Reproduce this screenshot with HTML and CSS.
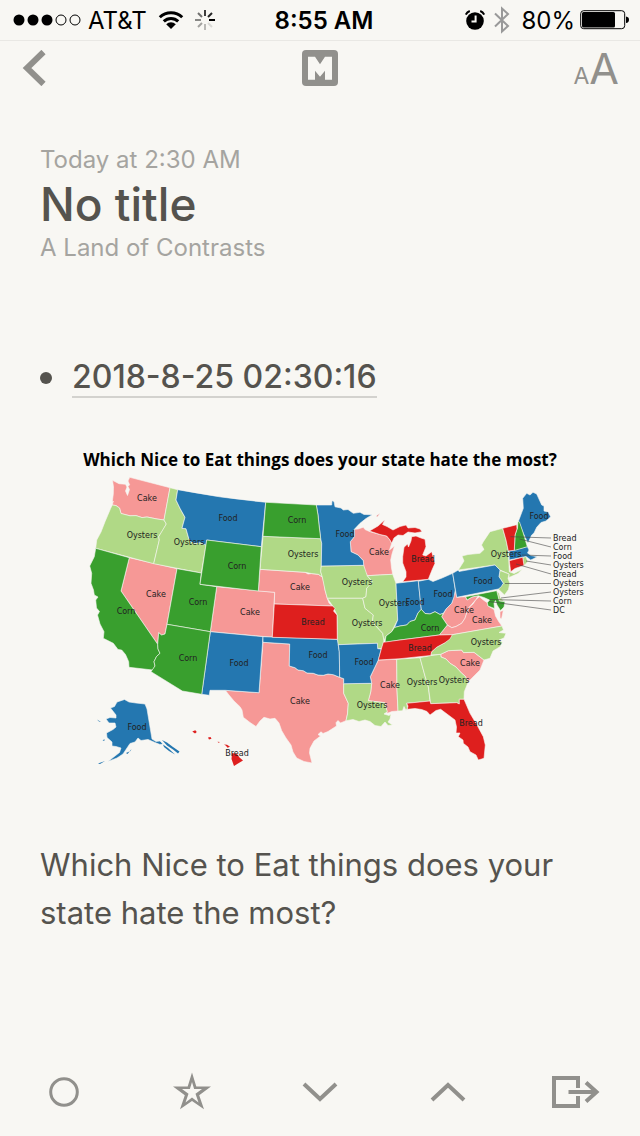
FILE: index.html
```html
<!DOCTYPE html>
<html lang="en">

<head>
  <title>No title</title>
  <meta charset="UTF-8">
  <meta name="viewport" content="width=device-width, initial-scale=1">
  <link rel="stylesheet" href="styles.css">
</head>

<body>

  <div class="status-bar">
    <div class="status-left">
      <svg class="signal" width="68" height="12" viewBox="0 0 68 12" aria-hidden="true">
        <circle cx="6" cy="6" r="5.5" />
        <circle cx="20" cy="6" r="5.5" />
        <circle cx="34" cy="6" r="5.5" />
        <circle class="empty" cx="48" cy="6" r="5" />
        <circle class="empty" cx="62" cy="6" r="5" />
      </svg>
      <span>AT&amp;T</span>
      <svg class="wifi" width="26" height="20" viewBox="0 0 26 20" aria-hidden="true">
        <path class="arc" d="M1.8 7.2a16 16 0 0 1 22.4 0M5.8 11.4a10.2 10.2 0 0 1 14.4 0" />
        <path d="M8.2 14.3a6.8 6.8 0 0 1 9.6 0L13 19z" />
      </svg>
      <svg class="spinner" width="20" height="20" viewBox="0 0 20 20" aria-hidden="true">
        <path opacity=".75" d="M10 0v6" />
        <path opacity=".85" d="M17 3l-4 4" />
        <path d="M20 10h-6" />
        <path opacity=".12" d="M17 17l-4-4" />
        <path opacity=".25" d="M10 20v-6" />
        <path opacity=".35" d="M3 17l4-4" />
        <path opacity=".45" d="M0 10h6" />
        <path opacity=".55" d="M3 3l4 4" />
      </svg>
    </div>
    <div class="time">8:55 AM</div>
    <div class="status-right">
      <svg class="alarm" width="20" height="20" viewBox="0 0 20 20" aria-hidden="true">
        <circle cx="10" cy="11" r="8.8" />
        <path class="bell" d="M.8 4.6a7 7 0 0 1 4-3.6M19.2 4.6a7 7 0 0 0-4-3.6" />
        <path class="hands" d="M10.6 5.5v6H6.5" />
      </svg>
      <svg class="bluetooth" width="16" height="28" viewBox="0 0 16 28" aria-hidden="true">
        <path d="M1 7.5l13 12.5-6 5.5v-23l6 5.5L1 20.5" />
      </svg>
      <span>80%</span>
      <svg class="battery" width="50" height="20" viewBox="0 0 50 20" aria-hidden="true">
        <rect class="case" x=".7" y=".7" width="44" height="18" rx="3" />
        <rect x="2" y="2" width="33" height="15.5" rx="1.5" />
        <path d="M46 6.5q3 .5 3 3.3t-3 3.3z" />
      </svg>
    </div>
  </div>

  <header class="nav">
    <a class="nav-back" href="#" aria-label="Back">
      <svg width="26" height="36" viewBox="0 0 26 36">
        <path d="M22.500 2L6 18l16.500 16" />
      </svg>
    </a>
    <a class="logo" href="#" aria-label="Home">
      <svg width="36" height="36" viewBox="0 0 36 36">
        <rect width="36" height="36" rx="4" />
        <path d="M6 6.700h7l5 7.500 5-7.500h7v23h-7v-9l-5 6-5-6v9H6z" />
      </svg>
    </a>
    <button class="text-size" aria-label="Text size"><span class="small">A</span><span class="big">A</span></button>
  </header>

  <main class="article">
    <p class="meta">Today at 2:30 AM</p>
    <h1>No title</h1>
    <p class="meta">A Land of Contrasts</p>

    <ul class="links">
      <li><a href="#">2018-8-25 02:30:16</a></li>
    </ul>

    <svg class="map" viewBox="40 440 560 340" role="img" aria-label="Map of food hated by state">
      <text class="map-title" x="320" y="466">Which Nice to Eat things does your state hate the most?</text>

      <g class="cake">
        <!-- WA NV CO NE -->
        <path d="M129.700 477.300L170 487.700 164 520 157 519 147 517 142 517.600 136 515.600 130 515.800 121 513.500 119.500 508 116 505.600 112.300 505 113.300 501 112.200 502.500 113.300 494 113.500 487 112.500 480.300 119 483.700 125.500 484.300 127 487 125.500 491 127.500 495.500 129.500 489.500 128 486.500 129.600 484.800 128 481z" />
        <path d="M129.300 557.700L177 568.700 167 624.300 165 634 161.500 635 158.700 632.700 157.700 644.300 121 591z" />
        <path d="M216.700 586.700L274.700 592.300 272.300 637.300 210.300 631.700z" />
        <path d="M260 569.300L305 572.300 308 574 311.700 573.600 315 574 318.300 574.300 322.300 577 324 583 325 590 327.300 598.300 329 603 332.700 606 274.300 604 274.700 592.300 258.300 591z" />
        <!-- TX -->
        <path d="M263 642.300L289.700 644 289.300 666 295 667.700 298 670 303.300 670.700 307 673 313.300 673.300 318 675 323.300 675.300 328 674 333.300 674.700 339.700 677.300 343.700 678.700 343.700 693.300 348.300 703.300 347.500 714 346 720.700 340.500 723 338 720.500 336 722.700 336.500 726 328 731.500 323 733.500 321 731.800 318 734.500 320.500 736 314 741 310 748.300 309.500 753 312 763 304 761.500 296.700 758 293 752 291 745 286 738 281.700 730.700 279 723 275 718.300 270 719 264 717.300 260 721 256 726.500 250 722.500 243.300 717.300 242 710 240 706.700 234 701 229 695 225.300 690.300 259 692.700z" />
        <!-- WI MS SC -->
        <path d="M354.300 529.300L358 529 363.300 527.300 365 529.500 370 531.700 380 534.500 386.700 536 390 540 391.700 543.300 389.500 550 394.500 546 392 554 390.700 560 391.500 568 392.700 574.300 367.300 575.700 364 570 363.300 560.700 358 555 351 551.700 350.300 541.700 354.300 536.700z" />
        <path d="M378.300 660L396.700 659.300 397 690 398 711 392 711.500 387.300 713.300 384.700 702.700 368.300 700.700 370.700 692 371.700 683.300 370.300 676.700 374 669z" />
        <path d="M440.700 654.300L448.300 650.700 461.700 650 463.500 652.600 474 652.300 484 660 480 670 474 676 468.300 681.700 465 676 461.700 673.300 456 667 450 663.300 446 659 441 657z" />
        <!-- WV VA -->
        <path d="M455.300 590L456.700 597.300 465.700 596.700 467 600 472 597 478.300 595.700 476 599.500 468.300 608.300 465 618.300 461.700 623.300 456 626.500 451.700 627.700 447.300 625 441.700 616.700 446 609 451.700 603.300z" />
        <path d="M447.300 625L451.700 627.700 456 626.500 461.700 623.300 465 618.300 468.300 608.300 473 604 476 599.500 479.300 596.700 484 600.500 487.300 602.700 488 606 494 609.500 495.500 616 499 622 502 626 452.300 634.700 439.300 635z" />
        <path d="M500 611.500L503.300 610.500 501.500 619 500 618z" />
      </g>

      <g class="oysters">
        <!-- OR ID -->
        <path d="M112.300 505L116 505.600 119.500 508 121 513.500 130 515.800 136 515.600 142 517.600 147 517 157 519 164 520 166.300 524 163 530 158.700 536.700 159.300 540 153.700 563.700 95.700 548.300 96.700 540 101 532 105 521.700 110.700 508.300z" />
        <path d="M170 487.700L177.700 489.700 176 500 180 508.300 183 514 185 517.300 182 528.300 186 528.700 188.700 538.300 190.700 542 195 543.300 200 542.700 205 544 206 545 201.300 573 153.700 563.700 159.300 540 158.700 536.700 166.300 524 164 520z" />
        <!-- SD IA MO IL -->
        <path d="M263 536.300L320.700 538.700 321.700 543.300 321.300 566 320.700 571.700 322.300 577 318.300 574.300 311.700 573.600 305 572.300 260 569.300z" />
        <path d="M321.300 566L363.700 565.300 367.300 575.700 372.300 581.700 371 585 366.700 588.300 366 596.700 362.700 598.300 327.300 598.300 325 590 322.300 577 320.700 571.700z" />
        <path d="M327.300 598.300L362.700 598.300 365 608.300 371 613 373.300 615 372.500 621 375 625 382.700 633.300 384 640.700 381.700 648.300 377.700 648.700 377.300 643.300 337.700 644.700 337 615 332.700 606z" />
        <path d="M367.300 575.700L392.700 574.300 396 583.300 397.700 620 395 625 391.700 631.700 386 636 384 640.700 382.700 633.300 375 625 372.500 621 373.300 615 365 608.300 362.700 598.300 366 596.700 366.700 588.300 372.300 581.700z" />
        <!-- LA AL GA NC -->
        <path d="M343.700 683.700L371.700 683.300 370.700 692 368.300 700.700 384.700 702.700 387.300 711.700 384 714 389 715.500 391 714 390 719 388 722 392.500 725 388 725.500 385 722 381 726.500 375 725.500 370 721.500 365 720 359 721.500 353 719.500 346 720.700 347.500 714 348.300 703.300 343.700 693.300z" />
        <path d="M396.700 659.300L420 657.700 425 676 428.300 686.700 430 701 406.700 703.300 407.500 708 406 710.500 404 706.500 402.500 710.800 398 711 397 690z" />
        <path d="M420 657.700L430.700 655.600 440.700 654.300 441 657 446 659 450 663.300 456 667 461.700 673.300 465 676 468.300 681.700 464.300 691.700 464 699.300 459.300 699.300 459.300 704 456.700 702.700 430.700 703.700 428.300 686.700 425 676z" />
        <path d="M452.300 634.700L502 626 503.500 630 499 632.500 506 633.300 504 638 499 640 502.500 642.500 500 646.700 493 651 490 658.300 484 660 474 652.300 463.500 652.600 461.700 650 448.300 650.700 440.700 654.300 430.700 655 431.700 651.700 437 647 445 642.700z" />
        <!-- NY NJ RI DE -->
        <path d="M458.300 570L464 561 462 556 468 554.500 480 553.300 484 549.500 481.500 545 483.300 541.700 490 531.700 502.700 528.300 506 540 508.300 551 509.300 571.700 514 573.500 522.300 569.300 518 573.500 509 577.500 509 574 500 570 495 565z" />
        <path d="M500 570.500L509 574 508 578.500 509.800 583 508.500 589.500 504.500 595 498.300 589 503.300 583.300 499 576.700z" />
        <path d="M522.700 557.300L526 556.500 527.700 561.700 524 565.700z" />
        <path d="M496.700 591L499 593 500.500 598 504.500 601.300 499.300 601z" />
      </g>

      <g class="food">
        <!-- MT NM OK AR -->
        <path d="M177.700 489.700Q220 498 265.700 502.300L261.300 546.700 206.700 540 206 545 200 542.700 195 543.300 190.700 542 188.700 538.300 186 528.700 182 528.300 185 517.300 180 508.300 176 500z" />
        <path d="M210.300 631.700L263 636.700 259 692.700 225.300 690.300 210 690.300 209.300 695.300 201.700 694.300z" />
        <path d="M263 636.700L337.300 639.300 339.300 651.700 339.700 677.300 333.300 674.700 328 674 323.300 675.300 318 675 313.300 673.300 307 673 303.300 670.700 298 670 295 667.700 289.300 666 289.700 644 263 642.300z" />
        <path d="M338.300 644.700L377.300 643.300 377.700 648.700 381.300 649 378.300 660 374 669 370.300 676.700 371.700 683.300 343.700 683.700 343.700 678.700 339.700 677.300 339.300 651.700z" />
        <!-- MN IN OH PA -->
        <path d="M316.300 505L331.700 505 332 500.700 334 501.500 335 506.800 341 508 343.300 510 348 509.500 353.300 513.300 360 512.300 364 514.500 372.300 514.700 366 518.500 360 523.300 354.300 529.300 354.300 536.700 350.300 541.700 351 551.700 358 555 363.300 560.700 363.700 565.300 321.300 566 321.700 543.300 320.700 538.700 319 525 318 515z" />
        <path d="M396 583.300L418.300 580.700 421.300 609.300 418 613 415 620 410 621.500 406.700 625 400 626 394.500 627.500 397.700 620z" />
        <path d="M418.300 581.300L428.300 579.300 433 581.500 442 578 452.700 573.300 455.300 590 454 597 451.700 603.300 446 609 443.300 613.300 440 614.500 435 611.700 430 614 425 613.500 421.300 609.300z" />
        <path d="M452.700 573.300L458.300 570 459 571.500 495 565 500 570 499 576.700 503.300 583.300 501 587 498.300 589 456.700 597.300z" />
        <!-- ME MA -->
        <path d="M518.500 521L523.300 508.300 522.700 498.300 526.700 493.300 530 495 533 492.300 536.700 494 541.700 505 544 506 544 511 548 512 550.700 516.700 546 521 541 522.500 536.700 527.300 534 533 531.700 535 528 543 525 537 523.300 533.300z" />
        <path d="M509 551L522 548 527.300 546.500 529 550 527.500 553 531 555.500 537.300 556.700 533 559 530.700 560 526 556.500 509.300 560z" />
        <!-- AK -->
        <path d="M124.500 699.500L129 702 136 703 145 704 147 709 150.500 730 152 739 156 741.500 160 741 163 744 160 744.500 155 742.500 148 739.500 141 740.500 138 738 135 742 130 743.500 127 748 123 754 117 758 108 761.500 115 756 119.500 752.500 121 748 116 746.500 112 746 112 742 107 737.500 106.500 733 113 729.500 116 727 115 723 109 723 106 719 110 717.500 116 718 116 715 110.500 708 114.500 706.500 117 702z" />
        <path class="islands" d="M162 740L167 742.500 173 747 179.500 751.500 178 753.500 173 749.500 167 745.500zM163 744.500L168 748 175 754.500 169 751 164 747zM126 753l4.500-2 1-2-4 5zM97 719.500l4 2.500-2-.5zM102.500 740l2.500-.5-1 1.500zM98 763.500l7-2.500-5 3zM93 766l3-1.500z" />
      </g>

      <g class="corn">
        <!-- CA UT AZ WY ND -->
        <path d="M95.700 548.300L129.300 557.700 121 591 157.700 644.300 158 649 160 653.300 156.500 656.500 154 661.700 155 666 152.700 670 129 667.300 128.700 661.700 125.500 654.500 121.700 650 118 649.500 113.300 643.300 103.300 638.300 104 631.700 100 624 97.500 615 99.500 611.500 96.500 608 95.700 600 98 597 94.300 595 93.500 590 91 583.300 91.700 573.300 89.700 566 94.300 556.700z" />
        <path d="M177 568.700L201.300 573 200 584.300 216.700 586.700 210.300 631.700 167 624.300z" />
        <path d="M167 624.300L210.300 631.700 201.700 694.300 182.300 691 151 671.700 155 666 154 661.700 156.500 656.500 160 653.300 158 649 157.700 644.300 158.700 632.700 161.500 635 165 634z" />
        <path d="M206.700 540L261.300 546.700 258.300 591 200 584.300z" />
        <path d="M265.700 502.300L316.300 505 318 515 319 525 320.700 538.700 263 536.300z" />
        <!-- KY NH MD -->
        <path d="M421.300 609.300L425 613.500 430 614 435 611.700 440 614.500 443.300 613.300 441.700 616.700 447.300 625 439.300 635 400 640 385 642.300 386 636 391.700 631.700 394.500 627.500 400 626 406.700 625 410 621.500 415 620 418 613z" />
        <path d="M518 521.300L519.500 522 523.300 533.300 527.300 546.700 514.300 550.500 515 535 517.500 528z" />
        <path d="M465.700 596.700L496.700 590.700 499.300 601 505 601.700 504 607 500.500 610.500 497 605 495.500 600.500 494 603 494.500 608.500 488 606 487.300 602.700 489.500 600 484 597.500 478.300 595.700 472 597 467 600z" />
      </g>

      <g class="bread">
        <!-- KS TN FL -->
        <path d="M274.300 604L332.700 606 335 608.500 333.500 611 337 615 337.300 639.300 272.300 637.300z" />
        <path d="M383.300 642.300L400 640 439.300 635 452.300 634.700 450 639 445 642.700 437 647 431.700 651.700 430.700 655.500 400 658.700 378.300 660 381.300 649z" />
        <path d="M406.700 703.300L430 701 430.700 703.700 456.700 702.700 459.300 704 459.300 699.300 464 699.300 470 713.300 477 725 483.300 736.700 485.300 745 484 758.300 478.300 760 476 755 470 751.700 468 747 463.300 743.300 463 740 458.300 736.700 460 733 456 733 456.500 727 455 720 449 715.500 440.700 709.300 436 710.500 430 715 427 711.500 421.700 709.500 415 708.500 407.300 709.300 408 706z" />
        <!-- MI VT CT -->
        <path d="M369.500 531L378 526 385 519.800 382.500 524.500 387 526.500 393 530 400 526.500 406 525 408 528 415 527.500 420 529 422 531.700 415 533 408 532 403 535.500 398 535 394 538 391.700 543.300 390 540 386.700 536 380 534.500z" />
        <path d="M376 516.500l4-3.500-2.500 3.500z" />
        <path d="M402.700 581.700L406 577 406 571.700 402.700 563 402.700 556.700 404 547.300 407.500 544 408.500 547 411 541 411.700 536.700 416 536 421 538 425 539.300 426 546.700 422.700 555 426 556 431.700 551.700 435 563.300 432 570 428.300 579.300z" />
        <path d="M502.700 528.300L516.700 524.700 517 529 515 535 514.300 550.300 508.300 551 506 540z" />
        <path d="M509.300 560.700L522.700 557.300 524 565.500 515 568.500 510.700 571.700z" />
        <!-- HI -->
        <path class="islands" d="M192.300 731.500l3-1.200 1.500 1.700-1.800 1.400zM208 737.500l2.500-.5 1 1.800-2.500.7zM217.500 741.700l2.500.3-1.500.8zM224 744.500l3 .3 3 2-2.500 1-1.500-2zM232 753l5 1 2.500 3.500 3.500 3-5 3-4 2.500-2.500-7z" />
      </g>

      <path class="leader" d="M510.500 536.700L551 538M519.500 539L551 547M522 555L551 556M526 561L551 565M516 564L551 574M505 583.500H551M501 598L551 592M490 599.500L551 601M489 601.500L551 610" />

      <g class="label">
        <text x="147" y="501">Cake</text>
        <text x="142" y="538">Oysters</text>
        <text x="189" y="545">Oysters</text>
        <text x="228" y="521">Food</text>
        <text x="297" y="523">Corn</text>
        <text x="303" y="557">Oysters</text>
        <text x="345" y="537">Food</text>
        <text x="379" y="555">Cake</text>
        <text x="423" y="562">Bread</text>
        <text x="237" y="569">Corn</text>
        <text x="300" y="590">Cake</text>
        <text x="357" y="585">Oysters</text>
        <text x="156" y="597">Cake</text>
        <text x="126" y="614">Corn</text>
        <text x="198" y="605">Corn</text>
        <text x="250" y="615">Cake</text>
        <text x="313" y="625">Bread</text>
        <text x="367" y="626">Oysters</text>
        <text x="394" y="606">Oysters</text>
        <text x="415" y="605">Food</text>
        <text x="443" y="597">Food</text>
        <text x="483" y="584">Food</text>
        <text x="506" y="557">Oysters</text>
        <text x="539" y="519">Food</text>
        <text x="464" y="613">Cake</text>
        <text x="482" y="623">Cake</text>
        <text x="430" y="631">Corn</text>
        <text x="486" y="645">Oysters</text>
        <text x="420" y="651">Bread</text>
        <text x="470" y="666">Cake</text>
        <text x="188" y="661">Corn</text>
        <text x="239" y="666">Food</text>
        <text x="318" y="658">Food</text>
        <text x="364" y="665">Food</text>
        <text x="390" y="688">Cake</text>
        <text x="422" y="685">Oysters</text>
        <text x="454" y="683">Oysters</text>
        <text x="300" y="704">Cake</text>
        <text x="372" y="708">Oysters</text>
        <text x="471" y="726">Bread</text>
        <text x="137" y="730">Food</text>
        <text x="237" y="756">Bread</text>
      </g>

      <g class="label side">
        <text x="553" y="541">Bread</text>
        <text x="553" y="550">Corn</text>
        <text x="553" y="559">Food</text>
        <text x="553" y="568">Oysters</text>
        <text x="553" y="577">Bread</text>
        <text x="553" y="586">Oysters</text>
        <text x="553" y="595">Oysters</text>
        <text x="553" y="604">Corn</text>
        <text x="553" y="613">DC</text>
      </g>
    </svg>

    <p class="body-text">Which Nice to Eat things does your state hate the most?</p>
  </main>

  <footer class="toolbar">
    <button aria-label="Mark as read">
      <svg width="32" height="32" viewBox="0 0 32 32">
        <circle cx="16" cy="16" r="13.3" />
      </svg>
    </button>
    <button aria-label="Favorite">
      <svg width="40" height="40" viewBox="0 0 40 40">
        <path fill-rule="evenodd" class="solid" d="M20 0.500L24.300 14.500H39L27.200 23.200 32 37.300 20 29 8 37.300 12.800 23.200 1 14.500H15.700zM20 10L17.900 17H10L16.500 21.800 13.500 30.500 20 25.500 26.500 30.500 23.500 21.800 30 17H22.100z" />
      </svg>
    </button>
    <button aria-label="Next">
      <svg width="36" height="20" viewBox="0 0 36 20">
        <path d="M2 2l16 15L34 2" />
      </svg>
    </button>
    <button aria-label="Previous">
      <svg width="36" height="20" viewBox="0 0 36 20">
        <path d="M2 18L18 3l16 15" />
      </svg>
    </button>
    <button aria-label="Share">
      <svg width="48" height="32" viewBox="0 0 48 32">
        <path d="M26 12V2H2v28h24V20M16.500 16H44M34 6.500L44.500 16 34 25.500" />
      </svg>
    </button>
  </footer>

</body>

</html>
```
FILE: styles.css
```css
* {
  box-sizing: border-box;
}

body {
  margin: 0;
  min-height: 100vh;
  display: flex;
  flex-direction: column;
  background-color: #f8f7f3;
  color: #55534e;
  font-family: Inter, "Liberation Sans", sans-serif;
}

h1,
p,
ul {
  margin: 0;
  padding: 0;
}

svg {
  display: block;
  flex: none;
}

button {
  padding: 0;
  border: none;
  background: none;
  color: inherit;
  font-family: inherit;
  cursor: pointer;
}

/* status bar */
.status-bar {
  display: grid;
  grid-template-columns: 1fr auto 1fr;
  align-items: center;
  height: 41px;
  padding: 0 5px 0 13px;
  border-bottom: 1px solid #e9e8e4;
  color: #000;
  font-size: 24px;
}

.status-left,
.status-right {
  display: flex;
  align-items: center;
}

.status-left {
  gap: 7px;
}

.status-right {
  justify-content: flex-end;
  gap: 5px;
  padding-right: 5px;
}

.time {
  font-weight: 600;
}

.signal .empty,
.battery .case {
  fill: none;
  stroke: #000;
}

.wifi {
  margin-left: 4px;
}

.wifi .arc {
  fill: none;
  stroke: #000;
  stroke-width: 3;
}

.spinner {
  margin-left: 4px;
  fill: none;
  stroke: #000;
  stroke-width: 2;
}

.alarm .bell {
  fill: none;
  stroke: #000;
  stroke-width: 2;
}

.alarm .hands {
  fill: none;
  stroke: #f8f7f3;
  stroke-width: 2;
}

.bluetooth {
  margin: 0 6px 0 4px;
  fill: none;
  stroke: #999;
  stroke-width: 2;
}

/* top navigation */
.nav {
  display: grid;
  grid-template-columns: 1fr auto 1fr;
  align-items: center;
  height: 54px;
  padding: 0 21px;
  color: #91908c;
}

.nav-back {
  justify-self: start;
  color: inherit;
}

.nav-back path {
  fill: none;
  stroke: currentColor;
  stroke-width: 6;
}

.logo rect {
  fill: #91908c;
}

.logo path {
  fill: #f8f7f3;
}

.text-size {
  display: flex;
  align-items: baseline;
  justify-self: end;
  line-height: 1;
}

.text-size .small {
  font-size: 23px;
}

.text-size .big {
  font-size: 43px;
}

/* article */
.article {
  flex: 1;
  padding: 48px 40px 0;
}

.meta {
  color: #a5a4a0;
  font-size: 24px;
  line-height: 34px;
}

h1 {
  font-size: 46px;
  font-weight: 500;
  line-height: 54px;
}

.links {
  margin-top: 93px;
  list-style: none;
  font-size: 32px;
  font-weight: 500;
}

.links li {
  display: flex;
  align-items: center;
  gap: 20px;
}

.links li::before {
  content: "";
  width: 12px;
  height: 12px;
  border-radius: 50%;
  background-color: #55534e;
}

.links a {
  color: inherit;
  line-height: 38px;
  border-bottom: 2px solid #d3d2ce;
  text-decoration: none;
}

.body-text {
  margin-top: 61px;
  font-size: 31px;
  line-height: 48px;
}

/* map */
.map {
  width: 100%;
  margin-top: 42px;
}

.map path {
  stroke: #f8f7f3;
  stroke-width: 0.6;
  stroke-linejoin: round;
}

.map .islands {
  stroke: none;
}

.map .leader {
  fill: none;
  stroke: #444;
}

.cake {
  fill: #f69896;
}

.oysters {
  fill: #b0d986;
}

.food {
  fill: #2477b0;
}

.corn {
  fill: #399f2e;
}

.bread {
  fill: #de1f1e;
}

.map-title {
  fill: #000;
  font-family: "Open Sans", sans-serif;
  font-size: 17px;
  font-weight: 700;
  text-anchor: middle;
}

.label {
  fill: #222;
  font-family: "DejaVu Sans", sans-serif;
  font-size: 8px;
  text-anchor: middle;
}

.side {
  text-anchor: start;
}

/* bottom toolbar */
.toolbar {
  display: grid;
  grid-template-columns: repeat(5, 1fr);
  height: 88px;
  color: #91908c;
}

.toolbar button {
  display: flex;
  align-items: center;
  justify-content: center;
}

.toolbar svg {
  fill: none;
  stroke: currentColor;
  stroke-width: 4;
}

.toolbar circle {
  stroke-width: 3;
}

.toolbar .solid {
  fill: currentColor;
  stroke: none;
}
```
